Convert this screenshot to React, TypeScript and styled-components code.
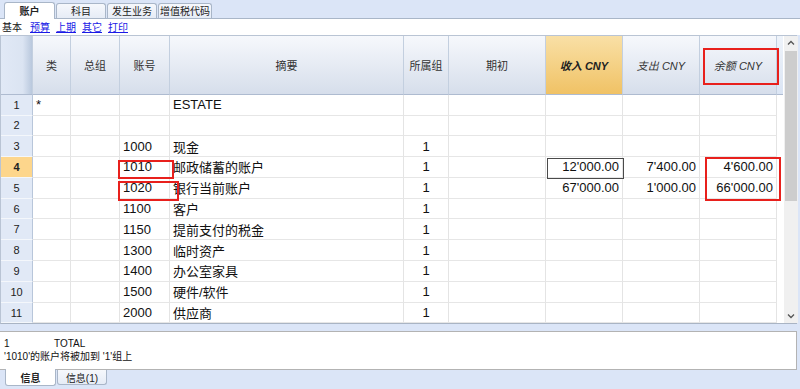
import React from "react";
import styled, { createGlobalStyle, css } from "styled-components";

const GlobalStyle = createGlobalStyle`
  html, body { margin: 0; padding: 0; }
  body {
    background: #dbe5f7;
    font-family: "Liberation Sans", "Noto Sans CJK SC", sans-serif;
    color: #111;
    width: 800px;
    height: 389px;
    overflow: hidden;
  }
`;

const Page = styled.div`
  display: flex;
  flex-direction: column;
  width: 800px;
  height: 389px;
`;

const TabBar = styled.div<{ $bottom?: boolean }>`
  display: flex;
  align-items: ${(p) => (p.$bottom ? "flex-start" : "flex-end")};
  height: 19px;
  padding-left: ${(p) => (p.$bottom ? "5px" : "4px")};
  box-sizing: border-box;
  ${(p) => (p.$bottom ? "" : "border-bottom: 1px solid #a9b6c8;")}
`;

const Tab = styled.div<{ $active?: boolean; $w: number; $bottom?: boolean }>`
  width: ${(p) => p.$w}px;
  height: ${(p) => (p.$active ? 17 : 15)}px;
  box-sizing: border-box;
  display: flex;
  align-items: center;
  justify-content: center;
  font-size: 10px;
  white-space: nowrap;
  margin-right: 1px;
  border: 1px solid #a9b6c8;
  ${(p) =>
    p.$bottom
      ? css`
          border-top: none;
          border-radius: 0 0 3px 3px;
          margin-top: ${p.$active ? -1 : 0}px;
        `
      : css`
          border-bottom: none;
          border-radius: 3px 3px 0 0;
          margin-bottom: ${p.$active ? -1 : 0}px;
        `}
  background: ${(p) =>
    p.$active ? "#ffffff" : "linear-gradient(#f6f8fc, #e6ecf6)"};
  font-weight: ${(p) => (p.$active ? "bold" : "normal")};
  color: #222;
`;

const LinkBar = styled.div`
  height: 16px;
  background: #fff;
  display: flex;
  align-items: center;
  gap: 6px;
  padding-left: 2px;
  font-size: 10px;
  box-sizing: border-box;
`;

const Plain = styled.span`
  color: #111;
  margin-right: 2px;
`;

const Link = styled.span`
  color: #1a1ae6;
  text-decoration: underline;
`;

const GridFrame = styled.div`
  position: relative;
  display: flex;
  margin: 0 3px 0 0;
  border-top: 1px solid #b9c4d4;
  border-left: 1px solid #b9c4d4;
  border-bottom: 1px solid #a9b4c4;
  background: #fff;
  height: 290px;
  box-sizing: border-box;
`;

const Table = styled.div`
  display: grid;
  grid-template-columns: 32px 38px 49px 50px 234px 45px 97px 77px 77px 77px 6px;
  grid-template-rows: 59px repeat(11, 20.8px);
  flex: none;
`;

const HeadCell = styled.div<{ $hl?: boolean; $italic?: boolean; $corner?: boolean }>`
  display: flex;
  align-items: center;
  justify-content: center;
  box-sizing: border-box;
  font-size: 11px;
  color: #333;
  border-right: 1px solid #c3cfdf;
  border-bottom: 1px solid #aebbd0;
  background: ${(p) =>
    p.$corner
      ? "linear-gradient(90deg, #e1e9f6 0%, #dbe4f2 70%, #b9c8dd 100%)"
      : p.$hl
      ? "linear-gradient(#f9e0a6, #f0c265)"
      : "linear-gradient(#f6f8fc, #d6deeb)"};
  font-style: ${(p) => (p.$italic ? "italic" : "normal")};
  font-weight: ${(p) => (p.$hl ? "bold" : "normal")};
  ${(p) => p.$hl && "color: #222;"}
`;

const RowNum = styled.div<{ $active?: boolean }>`
  display: flex;
  align-items: center;
  justify-content: center;
  box-sizing: border-box;
  font-size: 11px;
  color: #222;
  border-right: 1px solid #b8c6da;
  border-bottom: 1px solid #f4f7fb;
  background: ${(p) => (p.$active ? "#fdd68c" : "#e1e9f6")};
  font-weight: ${(p) => (p.$active ? "bold" : "normal")};
`;

const Cell = styled.div<{ $align?: "left" | "center" | "right" }>`
  display: flex;
  align-items: center;
  box-sizing: border-box;
  font-size: 13px;
  color: #111;
  white-space: nowrap;
  overflow: hidden;
  padding: 0 3px;
  border-right: 1px solid #e4e4e4;
  border-bottom: 1px solid #e6e6e6;
  justify-content: ${(p) =>
    p.$align === "right" ? "flex-end" : p.$align === "center" ? "center" : "flex-start"};
`;

const EdgeCell = styled.div<{ $head?: boolean }>`
  background: ${(p) => (p.$head ? "linear-gradient(#eef3fa, #dbe5f4)" : "#fff")};
  border-bottom: ${(p) => (p.$head ? "1px solid #aebbd0" : "none")};
  box-sizing: border-box;
`;

const Scrollbar = styled.div`
  width: 14px;
  flex: none;
  margin-left: 1px;
  background: #f0f0f0;
  display: flex;
  flex-direction: column;
  align-items: center;
`;

const ScrollArrow = styled.div`
  height: 15px;
  width: 14px;
  display: flex;
  align-items: center;
  justify-content: center;
  flex: none;
`;

const ScrollThumb = styled.div`
  width: 12px;
  height: 150px;
  background: #cdcdcd;
  flex: none;
`;

const ScrollFill = styled.div`
  flex: 1;
`;

const Mark = styled.div`
  position: absolute;
  border: 2px solid #e8201c;
  box-sizing: border-box;
  pointer-events: none;
`;

const Selected = styled.div`
  position: absolute;
  border: 1px solid #4a4a4a;
  box-sizing: border-box;
  pointer-events: none;
`;

const Gap = styled.div`
  height: 7px;
  flex: none;
`;

const InfoPanel = styled.div`
  height: 39px;
  margin-right: 3px;
  background: #fff;
  border: 1px solid #b3b3b3;
  border-left: none;
  box-sizing: border-box;
  padding: 5px 0 0 4px;
  font-size: 10px;
  line-height: 13px;
  color: #111;
`;

const InfoLine = styled.div`
  display: flex;
  white-space: pre;
`;

const InfoKey = styled.span`
  width: 50px;
`;

const Chevron = ({ up }: { up?: boolean }) => (
  <svg width="8" height="6" viewBox="0 0 8 6">
    <path
      d={up ? "M1 4.5 L4 1.5 L7 4.5" : "M1 1.5 L4 4.5 L7 1.5"}
      fill="none"
      stroke="#555"
      strokeWidth="1.3"
    />
  </svg>
);

type Row = {
  n: number;
  cls?: string;
  acct?: string;
  desc?: string;
  grp?: string;
  inc?: string;
  exp?: string;
  bal?: string;
};

const rows: Row[] = [
  { n: 1, cls: "*", desc: "ESTATE" },
  { n: 2 },
  { n: 3, acct: "1000", desc: "现金", grp: "1" },
  { n: 4, acct: "1010", desc: "邮政储蓄的账户", grp: "1", inc: "12'000.00", exp: "7'400.00", bal: "4'600.00" },
  { n: 5, acct: "1020", desc: "银行当前账户", grp: "1", inc: "67'000.00", exp: "1'000.00", bal: "66'000.00" },
  { n: 6, acct: "1100", desc: "客户", grp: "1" },
  { n: 7, acct: "1150", desc: "提前支付的税金", grp: "1" },
  { n: 8, acct: "1300", desc: "临时资产", grp: "1" },
  { n: 9, acct: "1400", desc: "办公室家具", grp: "1" },
  { n: 10, acct: "1500", desc: "硬件/软件", grp: "1" },
  { n: 11, acct: "2000", desc: "供应商", grp: "1" },
];

export default function App() {
  return (
    <Page>
      <GlobalStyle />
      <TabBar>
        <Tab $active $w={51}>账户</Tab>
        <Tab $w={50}>科目</Tab>
        <Tab $w={50}>发生业务</Tab>
        <Tab $w={54}>增值税代码</Tab>
      </TabBar>
      <LinkBar>
        <Plain>基本</Plain>
        <Link>预算</Link>
        <Link>上期</Link>
        <Link>其它</Link>
        <Link>打印</Link>
      </LinkBar>
      <GridFrame>
        <Table>
          <HeadCell $corner />
          <HeadCell>类</HeadCell>
          <HeadCell>总组</HeadCell>
          <HeadCell>账号</HeadCell>
          <HeadCell>摘要</HeadCell>
          <HeadCell>所属组</HeadCell>
          <HeadCell>期初</HeadCell>
          <HeadCell $hl $italic>收入 CNY</HeadCell>
          <HeadCell $italic>支出 CNY</HeadCell>
          <HeadCell $italic>余额 CNY</HeadCell>
          <EdgeCell $head />
          {rows.map((r) => (
            <React.Fragment key={r.n}>
              <RowNum $active={r.n === 4}>{r.n}</RowNum>
              <Cell>{r.cls}</Cell>
              <Cell />
              <Cell>{r.acct}</Cell>
              <Cell>{r.desc}</Cell>
              <Cell $align="center">{r.grp}</Cell>
              <Cell />
              <Cell $align="right">{r.inc}</Cell>
              <Cell $align="right">{r.exp}</Cell>
              <Cell $align="right">{r.bal}</Cell>
              <EdgeCell />
            </React.Fragment>
          ))}
        </Table>
        <Scrollbar>
          <ScrollArrow>
            <Chevron up />
          </ScrollArrow>
          <ScrollThumb />
          <ScrollFill />
          <ScrollArrow>
            <Chevron />
          </ScrollArrow>
        </Scrollbar>
        <Selected style={{ left: 546, top: 122, width: 77, height: 21 }} />
        <Mark style={{ left: 702, top: 12, width: 76, height: 37 }} />
        <Mark style={{ left: 117, top: 124, width: 56, height: 19 }} />
        <Mark style={{ left: 117, top: 145, width: 61, height: 20 }} />
        <Mark style={{ left: 704, top: 121, width: 76, height: 44 }} />
      </GridFrame>
      <Gap />
      <InfoPanel>
        <InfoLine>
          <InfoKey>1</InfoKey>
          <span>TOTAL</span>
        </InfoLine>
        <InfoLine>'1010'的账户将被加到 '1'组上</InfoLine>
      </InfoPanel>
      <TabBar $bottom>
        <Tab $active $bottom $w={51}>信息</Tab>
        <Tab $bottom $w={50}>信息(1)</Tab>
      </TabBar>
    </Page>
  );
}
